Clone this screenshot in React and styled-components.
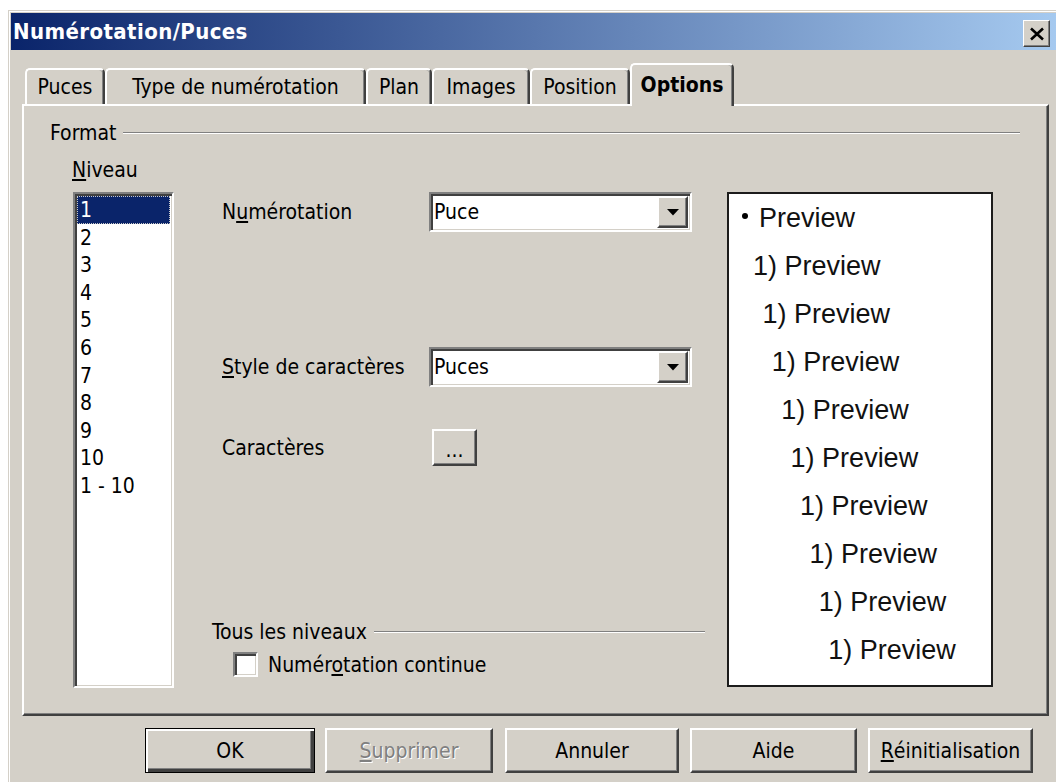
import styled, { createGlobalStyle } from 'styled-components';

const GlobalStyle = createGlobalStyle`
  html, body {
    margin: 0;
    background: #fff;
    overflow: hidden;
  }
  body {
    width: 1056px;
    height: 782px;
  }
`;

const uiFont = `"DejaVu Sans Condensed", "DejaVu Sans", sans-serif`;

const tabs = [
  { label: 'Puces', width: 80 },
  { label: 'Type de numérotation', width: 261 },
  { label: 'Plan', width: 66 },
  { label: 'Images', width: 98 },
  { label: 'Position', width: 100 },
  { label: 'Options', width: 104, active: true },
];

const levels = ['1', '2', '3', '4', '5', '6', '7', '8', '9', '10', '1 - 10'];

const ComboArrow = () => (
  <svg width="12" height="7" viewBox="0 0 12 7">
    <polygon points="0,0 12,0 6,6.5" fill="#000" />
  </svg>
);

const App = () => {
  return (
    <>
      <GlobalStyle />
      <Window>
        <TitleBar>
          <Title>Numérotation/Puces</Title>
          <CloseButton>
            <svg width="16" height="14" viewBox="0 0 16 14">
              <path d="M2 1.5 L14 12.5 M14 1.5 L2 12.5" stroke="#000" strokeWidth="2.6" />
            </svg>
          </CloseButton>
        </TitleBar>

        <Body>
          <TabStrip>
            {tabs.map((t) => (
              <Tab key={t.label} $width={t.width} $active={t.active}>
                {t.label}
              </Tab>
            ))}
          </TabStrip>

          <Panel>
            <GroupHeader>
              <span>Format</span>
              <Rule />
            </GroupHeader>

            <FormatBody>
              <LevelColumn>
                <Label><u>N</u>iveau</Label>
                <ListBox>
                  {levels.map((l, i) => (
                    <ListItem key={l} $selected={i === 0}>{l}</ListItem>
                  ))}
                </ListBox>
              </LevelColumn>

              <FieldColumn>
                <FieldRow>
                  <FieldLabel>N<u>u</u>mérotation</FieldLabel>
                  <Combo>
                    <ComboValue>Puce</ComboValue>
                    <ComboButton><ComboArrow /></ComboButton>
                  </Combo>
                </FieldRow>

                <FieldRow $gap={115}>
                  <FieldLabel><u>S</u>tyle de caractères</FieldLabel>
                  <Combo>
                    <ComboValue>Puces</ComboValue>
                    <ComboButton><ComboArrow /></ComboButton>
                  </Combo>
                </FieldRow>

                <FieldRow $gap={42}>
                  <FieldLabel>Caractères</FieldLabel>
                  <SmallButton>...</SmallButton>
                </FieldRow>

                <AllLevels>
                  <GroupHeader>
                    <span>Tous les niveaux</span>
                    <Rule />
                  </GroupHeader>
                  <CheckRow>
                    <CheckBox />
                    <span>Numér<u>o</u>tation continue</span>
                  </CheckRow>
                </AllLevels>
              </FieldColumn>

              <PreviewBox>
                {Array.from({ length: 10 }).map((_, i) => (
                  <PreviewLine key={i} style={{ paddingLeft: i === 0 ? 13 : 24 + (i - 1) * 9.4 }}>
                    {i === 0 ? <Bullet /> : '1) '}
                    Preview
                  </PreviewLine>
                ))}
              </PreviewBox>
            </FormatBody>
          </Panel>

          <ButtonRow>
            <PushButton $width={170} $default>OK</PushButton>
            <PushButton $width={168} $gap={10} $disabled><u>S</u>upprimer</PushButton>
            <PushButton $width={174} $gap={12}>Annuler</PushButton>
            <PushButton $width={167} $gap={11}>Aide</PushButton>
            <PushButton $width={165} $gap={11}><u>R</u>éinitialisation</PushButton>
          </ButtonRow>
        </Body>
      </Window>
    </>
  );
};

const Window = styled.div`
  margin: 10px 0 0 8px;
  width: 1055px;
  height: 800px;
  box-sizing: border-box;
  background: #d4d0c8;
  border: 1px solid;
  border-color: #d4d0c8 #404040 #404040 #d4d0c8;
  box-shadow: inset 1px 1px #fff, inset -1px -1px #808080;
  padding: 2px;
  font-family: ${uiFont};
  font-size: 21px;
  color: #000;
`;

const TitleBar = styled.div`
  height: 37px;
  display: flex;
  align-items: center;
  justify-content: space-between;
  padding: 0 10px 0 2px;
  background: linear-gradient(to right, #0a246a, #a6caf0);
`;

const Title = styled.div`
  color: #fff;
  font-weight: bold;
  font-size: 22px;
  letter-spacing: 0.4px;
`;

const CloseButton = styled.div`
  width: 27px;
  height: 27px;
  margin-top: 4px;
  box-sizing: border-box;
  display: flex;
  align-items: center;
  justify-content: center;
  background: #d4d0c8;
  border: 1px solid;
  border-color: #fff #404040 #404040 #fff;
  box-shadow: inset -1px -1px #808080;
`;

const Body = styled.div`
  padding: 13px 11px 0 11px;
`;

const TabStrip = styled.div`
  display: flex;
  align-items: flex-end;
  height: 43px;
  margin-bottom: -2px;
  padding-left: 3px;
  position: relative;
  z-index: 1;
`;

const Tab = styled.div`
  width: ${(p) => p.$width}px;
  height: ${(p) => (p.$active ? 43 : 36)}px;
  margin-bottom: ${(p) => (p.$active ? 0 : 2)}px;
  box-sizing: border-box;
  display: flex;
  align-items: center;
  justify-content: center;
  background: #d4d0c8;
  border-left: 2px solid #fff;
  border-top: 2px solid #fff;
  border-right: 2px solid #404040;
  border-radius: 5px 5px 0 0;
  box-shadow: inset -1px 0 #808080;
  font-weight: ${(p) => (p.$active ? 'bold' : 'normal')};
  padding-bottom: ${(p) => (p.$active ? 2 : 0)}px;
  white-space: nowrap;
`;

const Panel = styled.div`
  height: 612px;
  box-sizing: border-box;
  border: 2px solid;
  border-color: #fff #404040 #404040 #fff;
  box-shadow: inset -1px -1px #808080;
  padding: 15px 27px 0 26px;
`;

const GroupHeader = styled.div`
  display: flex;
  align-items: center;
  gap: 7px;
  line-height: 24px;
  white-space: nowrap;
`;

const Rule = styled.div`
  flex: 1;
  border-top: 1px solid #808080;
  border-bottom: 1px solid #fff;
`;

const FormatBody = styled.div`
  display: flex;
  margin-top: 13px;
  padding-left: 22px;
`;

const LevelColumn = styled.div`
  width: 102px;
  display: flex;
  flex-direction: column;
`;

const Label = styled.div`
  line-height: 24px;
`;

const sunken = `
  border: 2px solid;
  border-color: #808080 #fff #fff #808080;
  box-shadow: inset 2px 2px #404040, inset -1px -1px #d4d0c8;
  background: #fff;
`;

const ListBox = styled.div`
  ${sunken}
  margin: 10px 0 0 1px;
  width: 101px;
  height: 496px;
  box-sizing: border-box;
  padding: 2px 2px 0 2px;
`;

const ListItem = styled.div`
  height: 27.6px;
  line-height: 27px;
  padding-left: 2px;
  box-sizing: border-box;
  background: ${(p) => (p.$selected ? '#0a246a' : 'transparent')};
  color: ${(p) => (p.$selected ? '#fff' : '#000')};
  border: 1px dotted ${(p) => (p.$selected ? '#c8c8c8' : 'transparent')};
`;

const FieldColumn = styled.div`
  width: 493px;
  margin-left: 38px;
  padding: 34px 0 11px;
  box-sizing: border-box;
  height: 530px;
  display: flex;
  flex-direction: column;
`;

const FieldRow = styled.div`
  display: flex;
  align-items: center;
  padding-left: 10px;
  margin-top: ${(p) => p.$gap || 0}px;
`;

const FieldLabel = styled.div`
  width: 207px;
  white-space: nowrap;
`;

const Combo = styled.div`
  ${sunken}
  width: 263px;
  height: 40px;
  box-sizing: border-box;
  display: flex;
  align-items: stretch;
  padding: 2px;
`;

const ComboValue = styled.div`
  flex: 1;
  display: flex;
  align-items: center;
  padding-left: 1px;
`;

const raised = `
  background: #d4d0c8;
  border: 2px solid;
  border-color: #fff #404040 #404040 #fff;
  box-shadow: inset -1px -1px #808080;
`;

const ComboButton = styled.div`
  ${raised}
  width: 31px;
  box-sizing: border-box;
  display: flex;
  align-items: center;
  justify-content: center;
`;

const SmallButton = styled.div`
  ${raised}
  width: 45px;
  height: 37px;
  margin-left: 3px;
  box-sizing: border-box;
  display: flex;
  align-items: center;
  justify-content: center;
  padding-top: 5px;
`;

const AllLevels = styled.div`
  margin-top: auto;
`;

const CheckRow = styled.div`
  display: flex;
  align-items: center;
  gap: 10px;
  margin-top: 8px;
  padding-left: 21px;
  height: 25px;
`;

const CheckBox = styled.div`
  ${sunken}
  width: 25px;
  height: 25px;
  box-sizing: border-box;
`;

const PreviewBox = styled.div`
  margin: 34px 0 0 22px;
  width: 266px;
  height: 495px;
  box-sizing: border-box;
  background: #fff;
  border: 2px solid #1c1c1c;
  font-family: "Liberation Sans", Arial, sans-serif;
  font-size: 27px;
  color: #111;
`;

const PreviewLine = styled.div`
  height: 48px;
  line-height: 48px;
  white-space: nowrap;
  display: flex;
  align-items: center;
`;

const Bullet = styled.span`
  width: 6px;
  height: 6px;
  border-radius: 50%;
  background: #000;
  margin: 0 11px 4px 0;
`;

const ButtonRow = styled.div`
  display: flex;
  justify-content: flex-end;
  margin-top: 12px;
  padding-right: 16px;
`;

const PushButton = styled.div`
  width: ${(p) => p.$width}px;
  height: 45px;
  margin-left: ${(p) => p.$gap || 0}px;
  box-sizing: border-box;
  display: flex;
  align-items: center;
  justify-content: center;
  background: #d4d0c8;
  border: ${(p) => (p.$default ? '1px solid #000' : '2px solid')};
  border-color: ${(p) => (p.$default ? '#000' : '#fff #404040 #404040 #fff')};
  box-shadow: ${(p) =>
    p.$default
      ? 'inset 2px 2px #fff, inset -3px -3px #404040, inset -4px -4px #808080'
      : 'inset -1px -1px #808080'};
  color: ${(p) => (p.$disabled ? '#808080' : '#000')};
  text-shadow: ${(p) => (p.$disabled ? '1px 1px #fff' : 'none')};
`;

export default App;
